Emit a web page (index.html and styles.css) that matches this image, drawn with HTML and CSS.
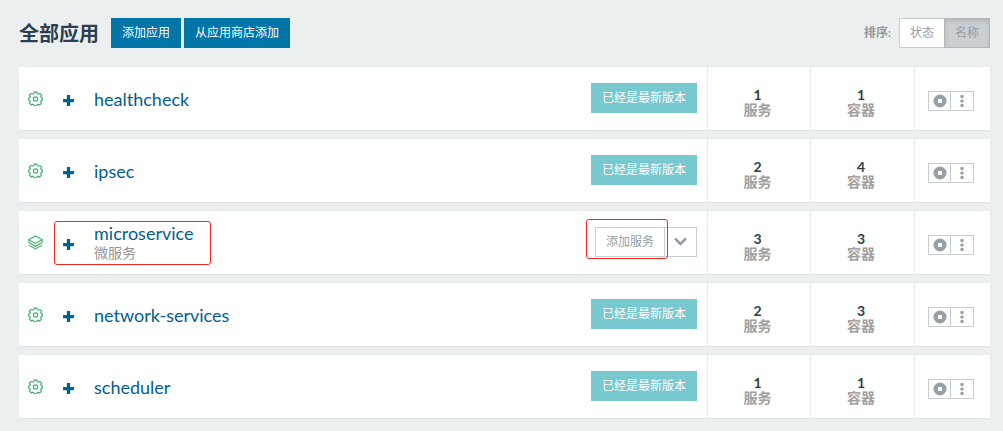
FILE: index.html
```html
<!DOCTYPE html>
<html lang="zh-CN">
<head>
<meta charset="utf-8">
<title>全部应用</title>
<link rel="stylesheet" href="styles.css">
</head>
<body>
<svg class="defs" aria-hidden="true">
  <symbol id="gear" viewBox="0 0 16 16">
    <path d="M6.6 1.2h2.8l.5 1.7 1.1.5 1.6-.9 1.9 1.9-.9 1.6.5 1.1 1.2.3v2.4l-1.3.5-.5 1.2.9 1.5-1.9 2-1.6-.9-1.1.5-.4 1.3H6.600l-.5-1.300-1.100-.5-1.600.9-1.900-2 .9-1.500-.5-1.200L.7 9.800V7.400l1.200-.3.5-1.100-.9-1.600 1.900-1.900 1.600.9 1.100-.5z"/>
    <circle cx="8" cy="8.500" r="2.300"/>
  </symbol>
  <symbol id="layers" viewBox="0 0 16 16">
    <path d="M8 1 15.300 5 8 9 .7 5zM.7 8 8 12l7.300-4M.7 10.800l7.300 4 7.300-4M1 5.500v2.500M15 5.500v2.500"/>
  </symbol>
  <symbol id="plus" viewBox="0 0 12 12"><path d="M4.500 1h3v3.500H11v3H7.500V11h-3V7.500H1v-3h3.500z"/></symbol>
  <symbol id="stop" viewBox="0 0 14 14"><path fill-rule="evenodd" d="M7 .5a6.500 6.500 0 1 0 0 13 6.500 6.500 0 0 0 0-13zM5 5h4v4H5z"/></symbol>
  <symbol id="dots" viewBox="0 0 4 14"><circle cx="2" cy="2.500" r="1.700"/><circle cx="2" cy="7" r="1.700"/><circle cx="2" cy="11.500" r="1.700"/></symbol>
  <symbol id="chevron" viewBox="0 0 12 8"><path d="M1 1.300 6 6.200l5-4.900"/></symbol>
</svg>

<header class="bar">
  <h1 class="title">全部应用</h1>
  <div class="adds">
    <button class="btn primary">添加应用</button>
    <button class="btn primary">从应用商店添加</button>
  </div>
  <div class="sort">
    <span class="sort-label">排序:</span>
    <div class="group">
      <button class="btn plain">状态</button>
      <button class="btn plain active" aria-pressed="true">名称</button>
    </div>
  </div>
</header>

<main class="stacks">
  <section class="stack">
    <svg class="kind"><use href="#gear"/></svg>
    <button class="expand" aria-label="展开"><svg><use href="#plus"/></svg></button>
    <div class="name"><a href="#">healthcheck</a></div>
    <div class="state"><button class="btn current">已经是最新版本</button></div>
    <div class="count"><b>1</b><span>服务</span></div>
    <div class="count"><b>1</b><span>容器</span></div>
    <div class="actions"><button aria-label="停止"><svg class="stop"><use href="#stop"/></svg></button><button aria-label="更多"><svg class="dots"><use href="#dots"/></svg></button></div>
  </section>
  <section class="stack">
    <svg class="kind"><use href="#gear"/></svg>
    <button class="expand" aria-label="展开"><svg><use href="#plus"/></svg></button>
    <div class="name"><a href="#">ipsec</a></div>
    <div class="state"><button class="btn current">已经是最新版本</button></div>
    <div class="count"><b>2</b><span>服务</span></div>
    <div class="count"><b>4</b><span>容器</span></div>
    <div class="actions"><button aria-label="停止"><svg class="stop"><use href="#stop"/></svg></button><button aria-label="更多"><svg class="dots"><use href="#dots"/></svg></button></div>
  </section>
  <section class="stack">
    <svg class="kind"><use href="#layers"/></svg>
    <button class="expand" aria-label="展开"><svg><use href="#plus"/></svg></button>
    <div class="name"><a href="#">microservice</a><small>微服务</small></div>
    <div class="state">
      <div class="group">
        <button class="btn plain">添加服务</button>
        <button class="btn plain more" aria-label="更多操作"><svg class="chevron"><use href="#chevron"/></svg></button>
      </div>
      <i class="mark mark-add"></i>
    </div>
    <div class="count"><b>3</b><span>服务</span></div>
    <div class="count"><b>3</b><span>容器</span></div>
    <div class="actions"><button aria-label="停止"><svg class="stop"><use href="#stop"/></svg></button><button aria-label="更多"><svg class="dots"><use href="#dots"/></svg></button></div>
    <i class="mark mark-name"></i>
  </section>
  <section class="stack">
    <svg class="kind"><use href="#gear"/></svg>
    <button class="expand" aria-label="展开"><svg><use href="#plus"/></svg></button>
    <div class="name"><a href="#">network-services</a></div>
    <div class="state"><button class="btn current">已经是最新版本</button></div>
    <div class="count"><b>2</b><span>服务</span></div>
    <div class="count"><b>3</b><span>容器</span></div>
    <div class="actions"><button aria-label="停止"><svg class="stop"><use href="#stop"/></svg></button><button aria-label="更多"><svg class="dots"><use href="#dots"/></svg></button></div>
  </section>
  <section class="stack">
    <svg class="kind"><use href="#gear"/></svg>
    <button class="expand" aria-label="展开"><svg><use href="#plus"/></svg></button>
    <div class="name"><a href="#">scheduler</a></div>
    <div class="state"><button class="btn current">已经是最新版本</button></div>
    <div class="count"><b>1</b><span>服务</span></div>
    <div class="count"><b>1</b><span>容器</span></div>
    <div class="actions"><button aria-label="停止"><svg class="stop"><use href="#stop"/></svg></button><button aria-label="更多"><svg class="dots"><use href="#dots"/></svg></button></div>
  </section>
</main>
</body>
</html>
```
FILE: styles.css
```css
* { box-sizing: border-box; }
body {
  margin: 0;
  padding: 18px 13px 13px 19px;
  background: #ebeff0;
  color: #2c3e50;
  font: 14px/16px Lato, "Noto Sans CJK SC", sans-serif;
}
button { font: inherit; margin: 0; cursor: pointer; }
svg { display: block; }
.defs { position: absolute; width: 0; height: 0; }

.bar { display: flex; align-items: center; margin-bottom: 19px; }
.title { margin: 0 12px 0 0; font-size: 20px; line-height: 30px; }
.adds { display: flex; gap: 3px; }
.btn {
  height: 30px;
  padding: 0 11px;
  border: 0;
  font-size: 12px;
  line-height: 18px;
  white-space: nowrap;
}
.primary { background: #0075a8; color: #fff; }
.current { background: #78c9cf; color: #fff; }
.plain { padding: 0 10px; border: 1px solid #c8cdd0; background: #fff; color: #969da2; }
.plain + .plain { margin-left: -1px; }
.active {
  border-color: #b1b8bc;
  background: #c9cfd2;
  box-shadow: inset 0 2px 4px #aeb5b9;
}
.group { display: flex; }
.sort { display: flex; align-items: center; gap: 8px; margin-left: auto; }
.sort-label { font-size: 12px; font-weight: bold; color: #969696; }

.stacks { display: grid; gap: 9px; }
.stack {
  position: relative;
  display: grid;
  grid-template-columns: 33px 33px minmax(0, 1fr) auto 103px 104px 76px;
  align-items: center;
  min-height: 63px;
  background: #fff;
  box-shadow: 0 1px 1px #e0e4e5;
}
.kind {
  width: 15px;
  height: 15px;
  margin-left: 9px;
  fill: none;
  stroke: #3fae6b;
  stroke-width: 1.200;
}
.expand { padding: 3px 10px 0; border: 0; background: none; }
.expand svg { width: 13px; height: 13px; fill: #00608f; }
.name { display: grid; padding: 1px 0 0 9px; font-size: 18px; line-height: 20px; }
.name a { color: #00608f; text-decoration: none; }
.name small { font-size: 14px; line-height: 20px; color: #969696; }
.state { position: relative; padding: 0 10px 2px; }
.count {
  display: grid;
  align-content: center;
  align-self: stretch;
  padding: 6px 3px 0 0;
  border-left: 1px dotted #d9dcde;
  text-align: center;
  line-height: 15px;
}
.count span { font-weight: bold; color: #a0a0a0; }
.actions {
  display: flex;
  align-items: center;
  align-self: stretch;
  padding: 4px 0 0 13px;
  border-left: 1px dotted #d9dcde;
}
.actions button {
  display: grid;
  place-items: center;
  width: 23px;
  height: 20px;
  padding: 0;
  border: 1px solid #c8cdd0;
  background: #fff;
}
.actions button + button { width: 24px; margin-left: -1px; }
.stop { width: 14px; height: 14px; fill: #969fa5; }
.dots { width: 4px; height: 14px; fill: #969fa5; }
.more { width: 33px; padding: 0 9px; }
.chevron { width: 13px; height: 9px; fill: none; stroke: #969fa5; stroke-width: 2.500; }
.mark { position: absolute; border: 1px solid #f5261b; border-radius: 3px; pointer-events: none; }
.mark-name { left: 35px; top: 10px; width: 157px; height: 44px; }
.mark-add { left: 1px; top: -8px; width: 82px; height: 40px; }
```
